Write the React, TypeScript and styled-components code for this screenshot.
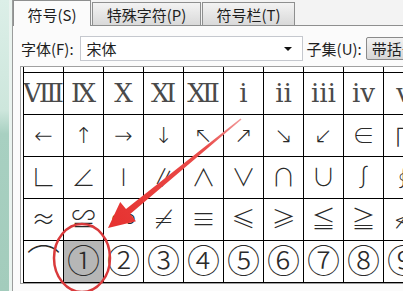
import React from 'react';
import styled, { createGlobalStyle } from 'styled-components';

const GlobalStyle = createGlobalStyle`
  html, body {
    margin: 0;
    padding: 0;
    background: #fbfbfb;
  }
  body {
    font-family: "Noto Sans CJK SC", sans-serif;
  }
`;

const Root = styled.div`
  position: relative;
  display: flex;
  width: 403px;
  height: 291px;
  overflow: hidden;
  background: #fbfbfb;
`;

// window edge behind the dialog
const LeftStrip = styled.div`
  flex: none;
  width: 9px;
  background: linear-gradient(180deg, #dcefe8 0%, #cde6dc 38%, #a8d0c1 46%, #a3ccbc 100%);
  border-right: 3px solid #eaf3ef;
`;

const Panel = styled.div`
  flex: 1;
  min-width: 0;
  display: flex;
  flex-direction: column;
  border-left: 1px solid #9b9d9c;
`;

const TabBar = styled.div`
  flex: none;
  height: 25px;
  display: flex;
  align-items: flex-end;
  background: #f3f3f3;
  border-bottom: 1px solid #8e8f8f;
`;

const Tab = styled.div<{ $active?: boolean; $w: number }>`
  flex: none;
  box-sizing: border-box;
  width: ${({ $w }) => $w}px;
  height: ${({ $active }) => ($active ? 26 : 23)}px;
  margin-bottom: ${({ $active }) => ($active ? -1 : 0)}px;
  margin-left: ${({ $active }) => ($active ? 0 : 1)}px;
  display: flex;
  align-items: center;
  justify-content: center;
  padding-top: ${({ $active }) => ($active ? 2 : 0)}px;
  border: 1px solid #8e8f8f;
  border-bottom: none;
  background: ${({ $active }) =>
    $active ? '#fbfbfb' : 'linear-gradient(180deg, #f3f3f3 0%, #e6e6e6 50%, #d9d9d9 100%)'};
  font-size: 15px;
  color: #1e1e1e;
  white-space: nowrap;
  z-index: ${({ $active }) => ($active ? 1 : 0)};
`;

const FontRow = styled.div`
  flex: none;
  box-sizing: border-box;
  height: 40px;
  padding: 5px 0 0 8px;
  display: flex;
  align-items: center;
  font-size: 15px;
  color: #1e1e1e;
  white-space: nowrap;
`;

const Label = styled.span<{ $gap?: number }>`
  flex: none;
  margin-left: ${({ $gap }) => $gap ?? 0}px;
`;

const FontSelect = styled.div`
  flex: none;
  box-sizing: border-box;
  width: 223px;
  height: 25px;
  margin-left: 6px;
  padding: 0 10px 0 6px;
  display: flex;
  align-items: center;
  justify-content: space-between;
  background: #ffffff;
  border: 1px solid #c5c8ce;
`;

const DropArrow = styled.span`
  width: 0;
  height: 0;
  border-left: 4px solid transparent;
  border-right: 4px solid transparent;
  border-top: 4px solid #111;
`;

const SubsetSelect = styled.div`
  flex: none;
  box-sizing: border-box;
  height: 23px;
  margin-left: 4px;
  padding: 0 8px 0 5px;
  display: flex;
  align-items: center;
  background: linear-gradient(180deg, #f2f2f2 0%, #e4e4e4 50%, #d6d6d6 100%);
  border: 1px solid #8a8a8a;
  border-radius: 2px;
`;

const GridFrame = styled.div`
  flex: none;
  margin-left: 7px;
  padding-left: 2px;
  border: 1px solid #a0a0a0;
  border-right: none;
  overflow: hidden;
  background: #ffffff;
`;

const Grid = styled.div`
  display: flex;
  flex-direction: column;
  width: max-content;
  border-left: 1px solid #000;
`;

const Row = styled.div<{ $h: number }>`
  display: flex;
  height: ${({ $h }) => $h}px;
`;

const Cell = styled.div<{ $size: number; $selected?: boolean; $serif?: boolean }>`
  flex: none;
  box-sizing: border-box;
  width: 40px;
  height: 100%;
  display: flex;
  align-items: center;
  justify-content: center;
  border-right: 1px solid #000;
  border-bottom: 1px solid #000;
  background: ${({ $selected }) => ($selected ? '#b6b6b6' : '#ffffff')};
  font-family: ${({ $serif }) =>
    $serif
      ? '"Liberation Serif", "DejaVu Serif", "Noto Sans CJK SC", serif'
      : '"DejaVu Sans", "Noto Sans CJK SC", sans-serif'};
  font-size: ${({ $size }) => $size}px;
  font-weight: ${({ $serif }) => ($serif ? 400 : 200)};
  line-height: 1;
  color: ${({ $serif }) => ($serif ? '#4a4a4a' : '#2a2a2a')};
  overflow: hidden;
`;

const Overlay = styled.svg`
  position: absolute;
  left: 0;
  top: 0;
  width: 403px;
  height: 291px;
  pointer-events: none;
`;

type SymRow = { chars: string[]; size: number; serif?: boolean };

const rows: SymRow[] = [
  { chars: ['Ⅷ', 'Ⅸ', 'Ⅹ', 'Ⅺ', 'Ⅻ', 'ⅰ', 'ⅱ', 'ⅲ', 'ⅳ', 'ⅴ'], size: 26, serif: true },
  { chars: ['←', '↑', '→', '↓', '↖', '↗', '↘', '↙', '∈', '∏'], size: 22 },
  { chars: ['∟', '∠', '∣', '∥', '∧', '∨', '∩', '∪', '∫', '∮'], size: 24 },
  { chars: ['≈', '≌', '∽', '≠', '≡', '≤', '≥', '≦', '≧', '≮'], size: 24 },
  { chars: ['⌒', '①', '②', '③', '④', '⑤', '⑥', '⑦', '⑧', '⑨'], size: 33 },
];

// arrow from the tail (241,119) to the tip (108,228)
const tip = { x: 108, y: 228 };
const tail = { x: 241, y: 119 };
const len = Math.hypot(tail.x - tip.x, tail.y - tip.y);
const ux = (tail.x - tip.x) / len;
const uy = (tail.y - tip.y) / len;
const px = -uy;
const py = ux;
const headLen = 26;
const headHalf = 12.5;
const bx = tip.x + ux * headLen;
const by = tip.y + uy * headLen;
const pt = (x: number, y: number) => `${x.toFixed(1)},${y.toFixed(1)}`;
const arrowPoints = [
  pt(tip.x, tip.y),
  pt(bx + px * headHalf, by + py * headHalf),
  pt(bx + px * 3.3, by + py * 3.3),
  pt(tail.x + px * 0.8, tail.y + py * 0.8),
  pt(tail.x - px * 0.8, tail.y - py * 0.8),
  pt(bx - px * 3.3, by - py * 3.3),
  pt(bx - px * headHalf, by - py * headHalf),
].join(' ');

const App: React.FC = () => {
  return (
    <>
      <GlobalStyle />
      <Root>
        <LeftStrip />
        <Panel>
          <TabBar>
            <Tab $active $w={78}>符号(S)</Tab>
            <Tab $w={109}>特殊字符(P)</Tab>
            <Tab $w={93}>符号栏(T)</Tab>
          </TabBar>
          <FontRow>
            <Label>字体(F):</Label>
            <FontSelect>
              <span>宋体</span>
              <DropArrow />
            </FontSelect>
            <Label $gap={4}>子集(U):</Label>
            <SubsetSelect>带括号的字母数字</SubsetSelect>
          </FontRow>
          <GridFrame>
            <Grid>
              {/* previous row, scrolled almost out of view */}
              <Row $h={6}>
                {Array.from({ length: 10 }).map((_, i) => (
                  <Cell key={i} $size={10} />
                ))}
              </Row>
              {rows.map((r, ri) => (
                <Row key={ri} $h={42}>
                  {r.chars.map((c, ci) => (
                    <Cell key={ci} $size={r.size} $serif={r.serif} $selected={ri === 4 && ci === 1}>
                      {c}
                    </Cell>
                  ))}
                </Row>
              ))}
            </Grid>
          </GridFrame>
        </Panel>
        <Overlay viewBox="0 0 403 291">
          <defs>
            <linearGradient id="arrowFill" x1={tail.x} y1={tail.y} x2={tip.x} y2={tip.y} gradientUnits="userSpaceOnUse">
              <stop offset="0" stopColor="#f29a9a" />
              <stop offset="0.25" stopColor="#ea4e4c" />
              <stop offset="1" stopColor="#e6312f" />
            </linearGradient>
          </defs>
          <ellipse cx={82} cy={258} rx={28} ry={34} fill="none" stroke="#d93a3c" strokeWidth={2.5} />
          <polygon points={arrowPoints} fill="url(#arrowFill)" />
        </Overlay>
      </Root>
    </>
  );
};

export default App;
